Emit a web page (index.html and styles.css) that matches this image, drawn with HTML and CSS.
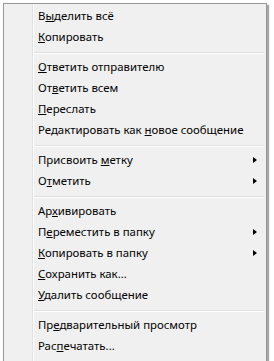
FILE: index.html
```html
<!DOCTYPE html>
<html lang="ru">
<head>
<meta charset="utf-8">
<link rel="stylesheet" href="styles.css">
</head>
<body>
<div class="menu">
  <div class="item">В<u>ы</u>делить всё</div>
  <div class="item"><u>К</u>опировать</div>
  <div class="sep"></div>
  <div class="item"><u>О</u>тветить отправителю</div>
  <div class="item">От<u>в</u>етить всем</div>
  <div class="item"><u>П</u>ереслать</div>
  <div class="item">Редактировать как <u>н</u>овое сообщение</div>
  <div class="sep"></div>
  <div class="item sub">Присвоить <u>м</u>етку</div>
  <div class="item sub">О<u>т</u>метить</div>
  <div class="sep"></div>
  <div class="item">Ар<u>х</u>ивировать</div>
  <div class="item sub">П<u>е</u>реместить в папку</div>
  <div class="item sub"><u>К</u>опировать в папку</div>
  <div class="item"><u>С</u>охранить как...</div>
  <div class="item"><u>У</u>далить сообщение</div>
  <div class="sep"></div>
  <div class="item">Пр<u>е</u>дварительный просмотр</div>
  <div class="item">Рас<u>п</u>ечатать...</div>
</div>
</body>
</html>
```

FILE: styles.css
```css
html, body {
  margin: 0;
  padding: 0;
}
body {
  width: 274px;
  height: 361px;
  overflow: hidden;
  background: #ffffff;
  position: relative;
  font-family: "Noto Sans", "DejaVu Sans", sans-serif;
}

.menu {
  position: absolute;
  left: 3px;
  top: 3px;
  width: 262px;
  height: 355px;
  padding: 2px 0;
  border: 1px solid #979797;
  background-color: #f0f0f0;
  background-image: linear-gradient(to right,
    transparent 28px, #e2e3e3 28px, #e2e3e3 29px,
    #ffffff 29px, #ffffff 30px, transparent 30px);
  box-shadow: 2px 2px 1px rgba(0, 0, 0, 0.35);
  display: flex;
  flex-direction: column;
  font-size: 11.4px;
  color: #000000;
}

.item {
  height: 21px;
  line-height: 20px;
  padding-left: 34px;
  white-space: nowrap;
  position: relative;
}
.item u {
  text-decoration: underline;
  text-underline-offset: 1px;
}
.item.sub::after {
  content: "";
  position: absolute;
  right: 9px;
  top: 7px;
  border-style: solid;
  border-width: 3.5px 0 3.5px 4px;
  border-color: transparent transparent transparent #000000;
}

.sep {
  height: 9px;
  margin-left: 30px;
  margin-right: 2px;
  background: linear-gradient(to bottom,
    transparent 4px, #e0e0e0 4px, #e0e0e0 5px,
    #ffffff 5px, #ffffff 6px, transparent 6px);
}
```
